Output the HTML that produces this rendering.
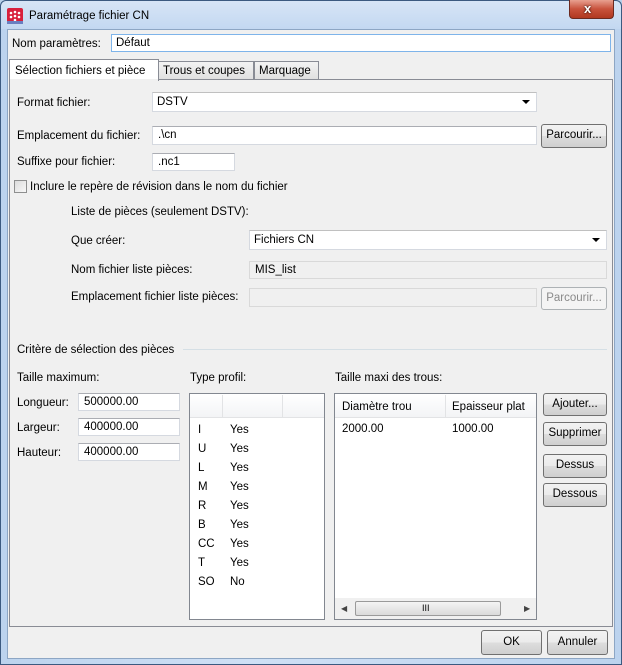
<!DOCTYPE html>
<html><head><meta charset="utf-8"><style>
*{box-sizing:border-box;margin:0;padding:0}
body{width:622px;height:665px;overflow:hidden;font-family:Tahoma,"Liberation Sans",sans-serif;font-size:11.5px;color:#000;position:relative;background:#b9d1ea}
.a{position:absolute}
.t{position:absolute;white-space:nowrap;line-height:14px}
.in{position:absolute;background:#fff;border:1px solid #d5d9e0;border-top-color:#abadb3;padding-left:5px;line-height:16px}
.dis{background:#f0f0f0;border:1px solid #d9d9d9}
.btn{position:absolute;border:1px solid #707070;border-radius:3px;background:linear-gradient(#f2f2f2 0%,#ebebeb 50%,#dddddd 51%,#cfcfcf 100%);text-align:center;line-height:20px}
.sel{position:absolute;background:#fff;border:1px solid #d5d9e0;border-top-color:#c0c0c0;padding-left:4px;line-height:18px}
.arr{position:absolute;right:6px;top:7px;width:0;height:0;border-left:4px solid transparent;border-right:4px solid transparent;border-top:4px solid #000}
</style></head><body>
<div class="a" style="left:0;top:0;width:622px;height:665px;border:1px solid #3c5a80;border-radius:6px 6px 0 0;background:linear-gradient(90deg,#bcd3ee,#cfe0f5 40%,#bcd3ee);"></div>
<div class="a" style="left:1px;top:1px;width:620px;height:28px;background:linear-gradient(#d7e5f6,#c3d8f1);border-radius:6px 6px 0 0"></div>
<svg class="a" style="left:7px;top:8px" width="16" height="16"><rect width="16" height="16" rx="2" fill="#d8203c"/><g fill="#fff"><circle cx="4" cy="5" r="1.3"/><circle cx="8" cy="4" r="1.3"/><circle cx="12" cy="5" r="1.3"/><circle cx="4" cy="9" r="1.3"/><circle cx="8" cy="8" r="1.3"/><circle cx="12" cy="9" r="1.3"/><circle cx="8" cy="12" r="1.3"/></g><rect x="0" y="13" width="16" height="3" fill="#6a7fc0"/></svg>
<div class="t" style="left:29px;top:9px;color:#000">Paramétrage fichier CN</div>
<div class="a" style="left:569px;top:0;width:45px;height:19px;border:1px solid #6b2a20;border-top:none;border-radius:0 0 4px 4px;background:linear-gradient(#e8a090,#c8523c 50%,#b03820)"></div>
<div class="t" style="left:584px;top:2px;color:#fff;font-weight:bold;font-size:13px;text-shadow:0 0 2px #000">x</div>
<div class="a" style="left:7px;top:29px;width:608px;height:630px;background:#f0f0f0;border:1px solid #8da6c4"></div>

<div class="t" style="left:12px;top:37px">Nom paramètres:</div>
<div class="in" style="left:111px;top:34px;width:500px;height:18px;border-color:#7eb4ea;padding-left:4px">Défaut</div>

<div class="a" style="left:9px;top:79px;width:604px;height:548px;border:1px solid #898c95;background:#f0f0f0"></div>
<div class="a" style="left:158px;top:61px;width:96px;height:19px;border:1px solid #898c95;background:linear-gradient(#f3f3f3,#e0e0e0)"></div>
<div class="t" style="left:163px;top:64px">Trous et coupes</div>
<div class="a" style="left:254px;top:61px;width:65px;height:19px;border:1px solid #898c95;background:linear-gradient(#f3f3f3,#e0e0e0)"></div>
<div class="t" style="left:259px;top:64px">Marquage</div>
<div class="a" style="left:9px;top:59px;width:150px;height:22px;border:1px solid #898c95;border-bottom:none;background:#fff"></div>
<div class="a" style="left:10px;top:79px;width:148px;height:2px;background:#f0f0f0"></div>
<div class="t" style="left:15px;top:64px">Sélection fichiers et pièce</div>

<div class="t" style="left:17px;top:96px">Format fichier:</div>
<div class="sel" style="left:152px;top:92px;width:385px;height:20px">DSTV<div class="arr"></div></div>
<div class="t" style="left:17px;top:129px">Emplacement du fichier:</div>
<div class="in" style="left:152px;top:126px;width:385px;height:19px">.\cn</div>
<div class="btn" style="left:541px;top:124px;width:66px;height:24px">Parcourir...</div>
<div class="t" style="left:17px;top:155px">Suffixe pour fichier:</div>
<div class="in" style="left:152px;top:153px;width:83px;height:18px">.nc1</div>
<div class="a" style="left:14px;top:180px;width:13px;height:13px;border:1px solid #8e8f8f;background:linear-gradient(135deg,#dcdcdc,#f8f8f8)"></div>
<div class="t" style="left:30px;top:180px">Inclure le repère de révision dans le nom du fichier</div>
<div class="t" style="left:71px;top:205px">Liste de pièces (seulement DSTV):</div>
<div class="t" style="left:71px;top:234px">Que créer:</div>
<div class="sel" style="left:249px;top:230px;width:358px;height:20px">Fichiers CN<div class="arr"></div></div>
<div class="t" style="left:71px;top:263px">Nom fichier liste pièces:</div>
<div class="in dis" style="left:249px;top:261px;width:358px;height:18px">MIS_list</div>
<div class="t" style="left:71px;top:290px">Emplacement fichier liste pièces:</div>
<div class="in dis" style="left:249px;top:288px;width:288px;height:19px"></div>
<div class="btn" style="left:541px;top:287px;width:66px;height:23px;border-color:#adb2b5;background:#f4f4f4;color:#8a8a8a">Parcourir...</div>

<div class="t" style="left:17px;top:343px">Critère de sélection des pièces</div>
<div class="a" style="left:183px;top:349px;width:424px;height:1px;background:#d5dfe5"></div>
<div class="t" style="left:17px;top:371px">Taille maximum:</div>
<div class="t" style="left:190px;top:371px">Type profil:</div>
<div class="t" style="left:335px;top:371px">Taille maxi des trous:</div>
<div class="t" style="left:17px;top:396px">Longueur:</div>
<div class="in" style="left:78px;top:393px;width:102px;height:18px">500000.00</div>
<div class="t" style="left:17px;top:421px">Largeur:</div>
<div class="in" style="left:78px;top:418px;width:102px;height:18px">400000.00</div>
<div class="t" style="left:17px;top:446px">Hauteur:</div>
<div class="in" style="left:78px;top:443px;width:102px;height:18px">400000.00</div>

<div class="a" style="left:189px;top:393px;width:136px;height:227px;border:1px solid #828790;background:#fff"></div>
<div class="a" style="left:190px;top:394px;width:134px;height:24px;background:linear-gradient(#fff,#f3f4f6);border-bottom:1px solid #e2e3e5"></div>
<div class="a" style="left:222px;top:395px;width:1px;height:22px;background:#e2e3e5"></div>
<div class="a" style="left:282px;top:395px;width:1px;height:22px;background:#e2e3e5"></div>
<div class="t" style="left:198px;top:421px;line-height:19px">I<br>U<br>L<br>M<br>R<br>B<br>CC<br>T<br>SO</div>
<div class="t" style="left:230px;top:421px;line-height:19px">Yes<br>Yes<br>Yes<br>Yes<br>Yes<br>Yes<br>Yes<br>Yes<br>No</div>

<div class="a" style="left:334px;top:393px;width:203px;height:227px;border:1px solid #828790;background:#fff"></div>
<div class="a" style="left:335px;top:394px;width:201px;height:24px;background:linear-gradient(#fff,#f3f4f6);border-bottom:1px solid #e2e3e5"></div>
<div class="a" style="left:445px;top:395px;width:1px;height:22px;background:#e2e3e5"></div>
<div class="t" style="left:342px;top:400px">Diamètre trou</div>
<div class="t" style="left:452px;top:400px">Epaisseur plat</div>
<div class="t" style="left:342px;top:422px">2000.00</div>
<div class="t" style="left:452px;top:422px">1000.00</div>
<div class="a" style="left:335px;top:598px;width:201px;height:21px;background:#f0f0f0"></div>
<div class="a" style="left:355px;top:601px;width:146px;height:15px;border:1px solid #9a9a9a;border-radius:2px;background:linear-gradient(#f4f4f4,#dadada)"></div>
<div class="t" style="left:422px;top:601px;font-size:9px">III</div>
<div class="t" style="left:341px;top:602px;font-size:8px;color:#444">◀</div>
<div class="t" style="left:524px;top:602px;font-size:8px;color:#444">▶</div>

<div class="btn" style="left:543px;top:393px;width:64px;height:23px">Ajouter...</div>
<div class="btn" style="left:543px;top:422px;width:64px;height:24px">Supprimer</div>
<div class="btn" style="left:543px;top:454px;width:64px;height:24px">Dessus</div>
<div class="btn" style="left:543px;top:483px;width:64px;height:24px">Dessous</div>

<div class="btn" style="left:481px;top:630px;width:61px;height:25px;line-height:23px">OK</div>
<div class="btn" style="left:547px;top:630px;width:61px;height:25px;line-height:23px">Annuler</div>
</body></html>
